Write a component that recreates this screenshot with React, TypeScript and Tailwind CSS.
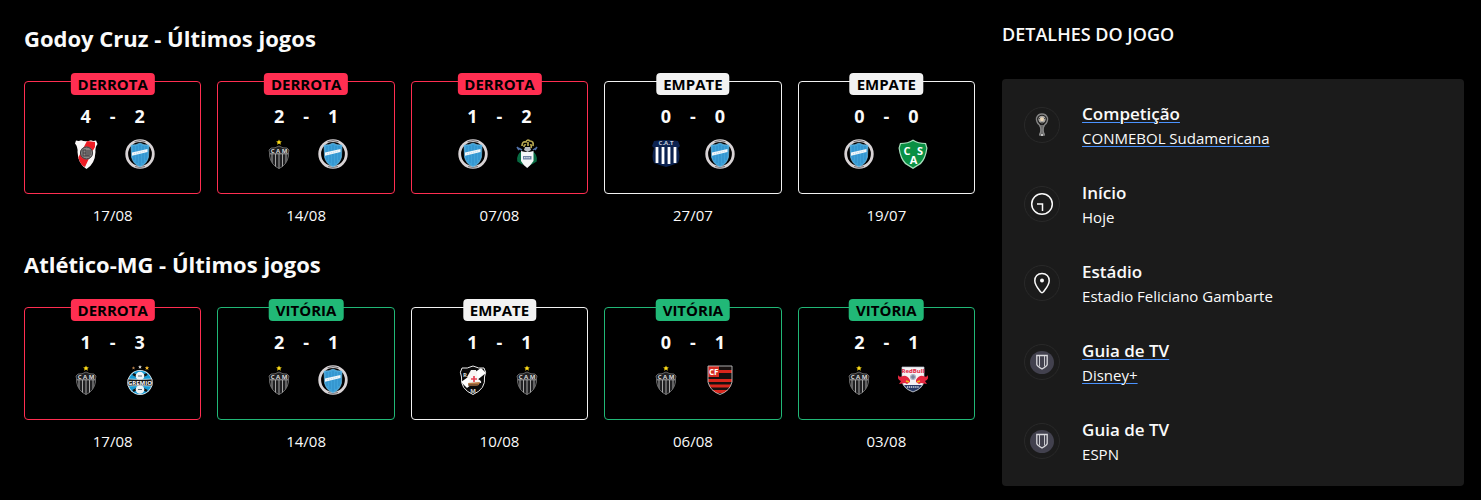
import type { ReactNode } from "react";
import clsx from "clsx";

type Result = "DERROTA" | "EMPATE" | "VITÓRIA";
type Team =
  | "river"
  | "godoy"
  | "atletico"
  | "gimnasia"
  | "talleres"
  | "sarmiento"
  | "gremio"
  | "vasco"
  | "flamengo"
  | "bragantino";

interface Match {
  result: Result;
  home: Team;
  away: Team;
  score: [number, number];
  date: string;
}

interface Detail {
  title: string;
  value: string;
  icon: ReactNode;
  href?: string;
}

const godoyMatches: Match[] = [
  { result: "DERROTA", home: "river", away: "godoy", score: [4, 2], date: "17/08" },
  { result: "DERROTA", home: "atletico", away: "godoy", score: [2, 1], date: "14/08" },
  { result: "DERROTA", home: "godoy", away: "gimnasia", score: [1, 2], date: "07/08" },
  { result: "EMPATE", home: "talleres", away: "godoy", score: [0, 0], date: "27/07" },
  { result: "EMPATE", home: "godoy", away: "sarmiento", score: [0, 0], date: "19/07" },
];

const atleticoMatches: Match[] = [
  { result: "DERROTA", home: "atletico", away: "gremio", score: [1, 3], date: "17/08" },
  { result: "VITÓRIA", home: "atletico", away: "godoy", score: [2, 1], date: "14/08" },
  { result: "EMPATE", home: "vasco", away: "atletico", score: [1, 1], date: "10/08" },
  { result: "VITÓRIA", home: "atletico", away: "flamengo", score: [0, 1], date: "06/08" },
  { result: "VITÓRIA", home: "atletico", away: "bragantino", score: [2, 1], date: "03/08" },
];

const borderColors: Record<Result, string> = {
  DERROTA: "border-[#ff2e51]",
  EMPATE: "border-[#f2f2f2]",
  VITÓRIA: "border-[#21b877]",
};

const badgeColors: Record<Result, string> = {
  DERROTA: "bg-[#ff2e51]",
  EMPATE: "bg-[#f2f2f2]",
  VITÓRIA: "bg-[#21b877]",
};

const STAR = "M0-2.4 .7-.8 2.4-.7 1.1.4 1.6 2.1 0 1.1-1.6 2.1-1.1.4-2.4-.7-.7-.8Z";

const crests: Record<Team, ReactNode> = {
  river: (
    <>
      <clipPath id="river">
        <path d="M5 1.500Q8 2.600 10 1.200Q15 3.200 20 1.200Q22 2.600 25 1.500L26.500 5Q24 8 24.500 13Q24 25 15.500 30Q7 25 6.500 13Q7 8 4 4.500Z" />
      </clipPath>
      <g clipPath="url(#river)">
        <rect width="30" height="30" fill="#fbf8f8" />
        <path d="M16 2 24 3V8L21 13 14 28 10 26 7 19Z" fill="#ed1c24" />
      </g>
      <circle cx="15.500" cy="14" r="6.500" fill="#8a8686" />
      <circle cx="15.500" cy="14" r="6" fill="none" stroke="#3b3739" />
      <path d="M12 11V17M12 11H15V14H12M15 14V17M17 11V17M19 11V16M12 17H19" stroke="#454143" fill="none" />
    </>
  ),
  godoy: (
    <>
      <circle cx="15" cy="15" r="13.300" fill="none" stroke="#d8d3d5" strokeWidth="2.800" />
      <path d="M9.500 2.700Q15 .5 20.500 2.700M10 27.600Q15 29.200 20 27.600" fill="none" stroke="#6f6c70" />
      <path d="M6 6Q11 6.500 15 4Q19 6.500 24 6L23.500 18Q22 25 15 28Q8 25 6.500 18Z" fill="#3ea2da" stroke="#7fc4e8" strokeWidth=".6" />
      <path d="M9 7V21M12 7V24M15 6V26M18 7V24M21 7V21" stroke="#2985bd" strokeWidth=".7" />
      <path d="M7 13.500 22.500 10V13L7 16.700Z" fill="#f2f7fa" />
      <path d="M9 14.800 20.500 12" stroke="#a8d3eb" strokeWidth=".8" strokeDasharray="1 1" />
    </>
  ),
  atletico: (
    <>
      <path d={STAR} transform="translate(15 3.300) scale(1.200)" fill="#ffdd18" />
      <clipPath id="atletico">
        <path d="M7 9Q11 9.500 15 7Q19 9.500 23 9L25 11Q24 14 24.500 17Q23 26 15 30Q7 26 5.500 17Q6 14 5 11Z" />
      </clipPath>
      <g clipPath="url(#atletico)">
        <rect width="30" height="30" fill="#202022" />
        <path d="M8 15V30M11.500 15V30M15 15V30M18.500 15V30M22 15V30" stroke="#a5a5a5" strokeWidth="1" />
        <path d="M4 14.800H26" stroke="#a7a7a7" />
      </g>
      <path d="M7 9Q11 9.500 15 7Q19 9.500 23 9L25 11Q24 14 24.500 17Q23 26 15 29.500Q7 26 5.500 17Q6 14 5 11Z" fill="none" stroke="#777" strokeWidth=".8" />
      <text x="15" y="14" textAnchor="middle" fontSize="6" fontWeight="700" fill="#ddd">C A M</text>
    </>
  ),
  gimnasia: (
    <>
      <path d="M10 7Q10 2 14 3Q15 0 18 2Q22 2 21 7M12 8Q12 5 14 6M16 3V7M18 6Q20 5 19 9" fill="none" stroke="#b5a650" strokeWidth="1.700" />
      <path d="M6 9 10 11M24 9 21 11M5 8 7 11M25 8 23 11" stroke="#5272aa" strokeWidth="1.500" />
      <path d="M10 13Q5 16 6 22L11 25M20 13Q25 16 24 22L19 25" fill="#086b42" stroke="#086b42" strokeWidth="1.500" />
      <path d="M13 8H18L19 11 15.500 13 12 11Z" fill="#b8bcc2" />
      <path d="M9 12Q15 14 21.500 12V22Q19 26 15.200 29Q11 26 9 22Z" fill="#f5f7f8" />
      <path d="M11 17H19.500V20.500H11Z" fill="#6f83a5" />
      <path d="M12 18.700H18.500" stroke="#ccd5e0" strokeWidth="1.200" strokeDasharray="1.500 .7" />
    </>
  ),
  talleres: (
    <>
      <path d="M3 2Q15 0 27 2L29 7 27 9Q30 18 27 24Q22 26 15 28Q8 26 3 24Q0 18 3 9L1 7Z" fill="#0b2250" />
      <path d="M6 8V24M12 8V25M18 8V25M24 8V24" stroke="#fff" strokeWidth="2.800" />
      <text x="15" y="6.300" textAnchor="middle" fontSize="6" fontWeight="700" fill="#c8d0dd">C.A.T</text>
    </>
  ),
  sarmiento: (
    <>
      <path d="M2 4Q10 4 15 .5Q20 4 28 4L29.500 9Q28 20 23 25L15 30 7 25Q2 20 .5 9Z" fill="#a8dfbd" />
      <path d="M3 5Q10 5 15 2Q20 5 27 5L28.300 9Q27 19 22 24L15 28.500 8 24Q3 19 1.700 9Z" fill="#099044" />
      <g fontSize="11" fontWeight="700" fill="#fff" textAnchor="middle">
        <text x="9" y="16">C</text>
        <text x="15.500" y="24.500">A</text>
        <text x="22" y="16">S</text>
      </g>
    </>
  ),
  gremio: (
    <>
      <path d={STAR} transform="translate(8.500 3) scale(.7)" fill="#be844d" />
      <path d={STAR} transform="translate(15 2) scale(.8)" fill="#d7d7d7" />
      <path d={STAR} transform="translate(22 3) scale(.9)" fill="#ffc22e" />
      <circle cx="15" cy="17.500" r="12.500" fill="#e9f0f5" />
      <circle cx="15" cy="17.500" r="11.700" fill="#169bd5" />
      <path d="M8 9Q15 14 22 9M8 26Q15 21 22 26" fill="none" stroke="#111" strokeWidth="2.500" />
      <circle cx="15" cy="11" r="4.300" fill="#edf3f6" />
      <circle cx="15" cy="24.500" r="4.300" fill="#edf3f6" />
      <path d="M13 11H17M13 24.500H17" stroke="#576872" />
      <path d="M3 14Q15 15 27 14V21Q15 20 3 21Z" fill="#121212" stroke="#eee" strokeWidth=".7" />
      <text x="15" y="19.700" textAnchor="middle" fontSize="6" fontWeight="700" fill="#fff">GREMIO</text>
    </>
  ),
  vasco: (
    <>
      <clipPath id="vasco">
        <path d="M4 3Q9 4 15 1Q21 4 26 3Q29 7 26.500 12Q28 24 15 30Q2 24 3.500 12Q1 7 4 3Z" />
      </clipPath>
      <g clipPath="url(#vasco)">
        <rect width="30" height="30" fill="#090909" />
        <path d="M23 3 28 8 9 23 3 17Z" fill="#fff" />
      </g>
      <path d="M4 3Q9 4 15 1Q21 4 26 3Q29 7 26.500 12Q28 24 15 29.500Q2 24 3.500 12Q1 7 4 3Z" fill="none" stroke="#eee" />
      <path d="M13 5H18L20 14Q24 16 23 18L10 19 12 15 9 12Z" fill="#f7f5f3" />
      <path d="M16 11V17M13 14H19" stroke="#e64152" strokeWidth="1.700" />
      <path d="M10 18 22 17Q21 21 18 21H11Z" fill="#b8773f" />
      <path d="M10 20H20" stroke="#4d3428" />
      <text x="7" y="12" textAnchor="middle" fontSize="6" fill="#ddd">R</text>
      <text x="15" y="27.500" textAnchor="middle" fontSize="6" fill="#ddd">M</text>
    </>
  ),
  flamengo: (
    <>
      <clipPath id="flamengo">
        <path d="M3 1H27V17Q25 26 15 30Q5 26 3 17Z" />
      </clipPath>
      <g clipPath="url(#flamengo)">
        <rect width="30" height="30" fill="#17100f" />
        <path d="M14 6.500H27M3 15.500H27M3 21H27M3 26.500H27" stroke="#d9261c" strokeWidth="3.200" />
        <path d="M3 1H14V12H3Z" fill="#d72b21" />
      </g>
      <text x="8.700" y="10" textAnchor="middle" fontSize="8" fontWeight="700" fill="#fff">CF</text>
      <path d="M3 1H27V17Q25 26 15 29.500Q5 26 3 17Z" fill="none" stroke="#bdbdbd" strokeWidth=".9" />
    </>
  ),
  bragantino: (
    <>
      <path d="M4 2H26V17Q24 24 15 27Q6 24 4 17Z" fill="#f5f3f5" stroke="#bac1cf" strokeWidth=".7" />
      <path d="M6 20H24Q21 24.500 15 26.500Q9 24.500 6 20Z" fill="#293b66" />
      <path d="M9 22H21" stroke="#dbe1ec" strokeWidth="1.500" strokeDasharray="1.200 .7" />
      <circle cx="15" cy="12" r="3" fill="#aab2c2" />
      <path d="M15 10V14M13 12H17" stroke="#68748e" />
      <path d="M0 10Q1 13 5 11Q9 10 12 15L12 17 9 19 7 18 1 19 3 16Q-1 15 0 10ZM30 10Q29 13 25 11Q21 10 18 15L18 17 21 19 23 18 29 19 27 16Q31 15 30 10Z" fill="#e5263f" />
      <path d="M8 16 11 17M22 16 19 17" stroke="#f3b81a" strokeWidth="1.700" />
      <text x="15" y="7.500" textAnchor="middle" fontSize="6" fontWeight="700" fill="#df203b">RedBull</text>
    </>
  ),
};

function TrophyIcon() {
  return (
    <svg viewBox="0 0 24 24" className="size-6" aria-hidden="true">
      <path d="M9.500 12 10.500 18 9 23H15L13.500 18 14.500 12Z" fill="#686868" />
      <path d="M9.500 22Q12.500 17 9.500 12Q6 9 6.500 5Q8 1 12 1Q16 1 17.500 5Q18 9 14.500 12Q11.500 17 14.500 22" fill="none" stroke="#858585" strokeWidth="1.400" />
      <circle cx="12" cy="6.300" r="3.600" fill="#a9a7a3" />
      <path d="M12 4 14 5.500 13.300 8H10.700L10 5.500Z" fill="#ead6b6" />
      <path d="M9 5 10 6M15 5 14 6M11 9 12 11 13 9" fill="none" stroke="#494949" />
      <circle cx="12" cy="22" r="1" fill="#ddd" />
    </svg>
  );
}

function ClockIcon() {
  return (
    <svg viewBox="0 0 24 24" className="size-6" fill="none" stroke="#fafafa" strokeWidth="1.500" aria-hidden="true">
      <circle cx="12" cy="12" r="10.300" />
      <path d="M7 12H12.500V19" />
    </svg>
  );
}

function PinIcon() {
  return (
    <svg viewBox="0 0 24 24" className="size-6" fill="none" stroke="#fafafa" strokeWidth="1.500" aria-hidden="true">
      <path d="M12 2.500C7.500 2.500 4.800 5.700 4.800 9.700C4.800 14 8.500 18 10.500 20.800Q12 22.500 13.500 20.800C15.500 18 19.200 14 19.200 9.700C19.200 5.700 16.500 2.500 12 2.500Z" />
      <circle cx="12" cy="9.500" r="2" fill="#fafafa" stroke="none" />
    </svg>
  );
}

function ShieldIcon() {
  return (
    <svg viewBox="0 0 24 24" className="size-6" fill="none" aria-hidden="true">
      <ellipse cx="12" cy="12.500" rx="12" ry="11.500" fill="#42414e" />
      <path d="M6.800 5.500H17.200V14.500Q16.500 16.500 12 19Q7.500 16.500 6.800 14.500Z" stroke="#d8d8dc" strokeWidth="1.300" />
      <path d="M9.500 6V16.500M14.500 6V16.500" stroke="#c8c8ce" strokeWidth="1" />
    </svg>
  );
}

const details: Detail[] = [
  { title: "Competição", value: "CONMEBOL Sudamericana", icon: <TrophyIcon />, href: "#competicao" },
  { title: "Início", value: "Hoje", icon: <ClockIcon /> },
  { title: "Estádio", value: "Estadio Feliciano Gambarte", icon: <PinIcon /> },
  { title: "Guia de TV", value: "Disney+", icon: <ShieldIcon />, href: "#disney" },
  { title: "Guia de TV", value: "ESPN", icon: <ShieldIcon /> },
];

function Crest({ team }: { team: Team }) {
  return (
    <svg viewBox="0 0 30 30" className="size-[30px]" aria-hidden="true">
      {crests[team]}
    </svg>
  );
}

function MatchCard({ match }: { match: Match }) {
  return (
    <li className="text-center">
      <div className={clsx("relative h-[113px] rounded border pt-[22px]", borderColors[match.result])}>
        <span
          className={clsx(
            "absolute -top-[9px] left-1/2 h-[22px] -translate-x-1/2 rounded px-[7px] text-[15px] leading-[22px] font-bold text-black",
            badgeColors[match.result]
          )}
        >
          {match.result}
        </span>
        <div className="flex justify-center text-lg leading-6 font-bold">
          <div className="flex w-[30px] flex-col items-center gap-[11px]">
            <span>{match.score[0]}</span>
            <Crest team={match.home} />
          </div>
          <div className="w-6">-</div>
          <div className="flex w-[30px] flex-col items-center gap-[11px]">
            <span>{match.score[1]}</span>
            <Crest team={match.away} />
          </div>
        </div>
      </div>
      <p className="mt-[9px] text-[15px] leading-6">{match.date}</p>
    </li>
  );
}

function LastMatches({ team, matches }: { team: string; matches: Match[] }) {
  return (
    <section>
      <h2 className="text-[22px] leading-8 font-bold">{team} - Últimos jogos</h2>
      <ul className="mt-[27px] grid grid-cols-5 gap-4">
        {matches.map((match) => (
          <MatchCard key={match.date} match={match} />
        ))}
      </ul>
    </section>
  );
}

function DetailText({ detail }: { detail: Detail }) {
  return (
    <>
      <strong className="block text-[17px] leading-6 font-semibold">{detail.title}</strong>
      <span className="block text-[15px] leading-6">{detail.value}</span>
    </>
  );
}

export default function App() {
  return (
    <main className="grid min-h-screen grid-cols-[35fr_17fr] gap-[27px] bg-black pt-[22px] pr-[17px] pb-[14px] pl-6 font-['Open_Sans','Noto_Sans',sans-serif] text-[#fafafa]">
      <div className="flex flex-col gap-[21px]">
        <LastMatches team="Godoy Cruz" matches={godoyMatches} />
        <LastMatches team="Atlético-MG" matches={atleticoMatches} />
      </div>

      <aside>
        <h2 className="text-lg leading-6 font-semibold">DETALHES DO JOGO</h2>
        <ul className="mt-[33px] rounded bg-[#1b1b1b] px-[22px] py-[6px]">
          {details.map((detail) => (
            <li key={detail.value} className="flex h-[79px] items-center gap-[22px]">
              <span className="flex size-9 shrink-0 items-center justify-center rounded-full border border-[#292929]">
                {detail.icon}
              </span>
              {detail.href ? (
                <a href={detail.href} className="pt-[2px] underline decoration-[#4b93ff] decoration-1 underline-offset-2">
                  <DetailText detail={detail} />
                </a>
              ) : (
                <div className="pt-[2px]">
                  <DetailText detail={detail} />
                </div>
              )}
            </li>
          ))}
        </ul>
      </aside>
    </main>
  );
}
